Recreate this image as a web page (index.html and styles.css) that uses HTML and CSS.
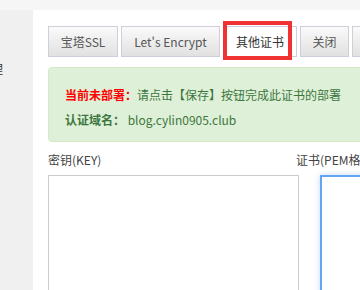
FILE: index.html
```html
<!DOCTYPE html>
<html lang="zh-CN">
<head>
    <meta charset="UTF-8">
    <title>SSL</title>
    <link rel="stylesheet" href="styles.css">
</head>
<body>
    <div class="topbar"></div>
    <div class="main">
        <div class="sidebar"><span class="side-item">管理</span></div>
        <div class="content">
            <div class="tabs">
                <div class="tab tab-bt">宝塔SSL</div>
                <div class="tab tab-le">Let's Encrypt</div>
                <div class="tab tab-other active">其他证书<span class="mark"></span></div>
                <div class="tab tab-close">关闭</div>
                <div class="tab tab-close">帮助</div>
            </div>
            <div class="alert">
                <p><b class="warn">当前未部署：</b>请点击【保存】按钮完成此证书的部署</p>
                <p><b>认证域名：</b> blog.cylin0905.club</p>
            </div>
            <div class="fields">
                <div class="field">
                    <label>密钥(KEY)</label>
                    <textarea class="box"></textarea>
                </div>
                <div class="field field-cert">
                    <label>证书(PEM格式)</label>
                    <textarea class="box focus"></textarea>
                </div>
            </div>
        </div>
    </div>
</body>
</html>
```

FILE: styles.css
```css
body {
    margin: 0;
    width: 360px;
    height: 290px;
    overflow: hidden;
    font-family: "Noto Sans CJK SC", "Liberation Sans", sans-serif;
    font-size: 12px;
    color: #555;
    background: #fff;
}
.topbar {
    height: 10px;
    background: #f6f6f6;
}
.main {
    display: flex;
    height: 280px;
}
.sidebar {
    width: 33px;
    flex-shrink: 0;
    background: #f0f0f0;
    overflow: hidden;
    padding-top: 51px;
    box-sizing: border-box;
}
.side-item {
    display: block;
    margin-left: -21px;
    color: #333;
    line-height: 16px;
}
.content {
    flex-shrink: 0;
    width: 500px;
    padding: 16px 0 0 15px;
}
.tabs {
    display: flex;
    gap: 3px;
}
.tab {
    position: relative;
    box-sizing: border-box;
    height: 31px;
    line-height: 29px;
    text-align: center;
    border: 1px solid #cfcfdc;
    background: linear-gradient(#fafafa, #e1e1e1);
    color: #555;
    font-size: 12px;
}
.tab-bt {
    width: 70px;
}
.tab-le {
    width: 99px;
}
.tab-other {
    width: 74px;
}
.tab-close {
    width: 49px;
}
.tab.active {
    background: #fff;
    color: #333;
}
.mark {
    position: absolute;
    left: -1px;
    top: -6px;
    width: 61px;
    height: 31px;
    border: 4px solid #f03232;
}
.alert {
    margin-top: 10px;
    width: 420px;
    height: 75px;
    padding: 14px 16px 0;
    box-sizing: border-box;
    background: #dff0d8;
    border: 1px solid #d6e9c6;
    border-radius: 4px;
    color: #3c763d;
}
.alert p {
    margin: 0;
    line-height: 25px;
    font-size: 12px;
}
.alert b {
    font-weight: bold;
}
.warn {
    color: #f00;
}
.fields {
    display: flex;
    margin-top: 10px;
}
.field {
    display: flex;
    flex-direction: column;
}
.field label {
    line-height: 16px;
    margin-bottom: 7px;
    color: #444;
}
.field-cert {
    margin-left: -3px;
}
.box {
    width: 251px;
    height: 140px;
    margin: 0;
    border: 1px solid #ccc;
    box-sizing: border-box;
    resize: none;
}
.focus {
    margin-left: 24px;
    border: 2px solid #66a3f0;
    box-shadow: 0 0 6px rgba(102, 163, 240, 0.4);
}
```
